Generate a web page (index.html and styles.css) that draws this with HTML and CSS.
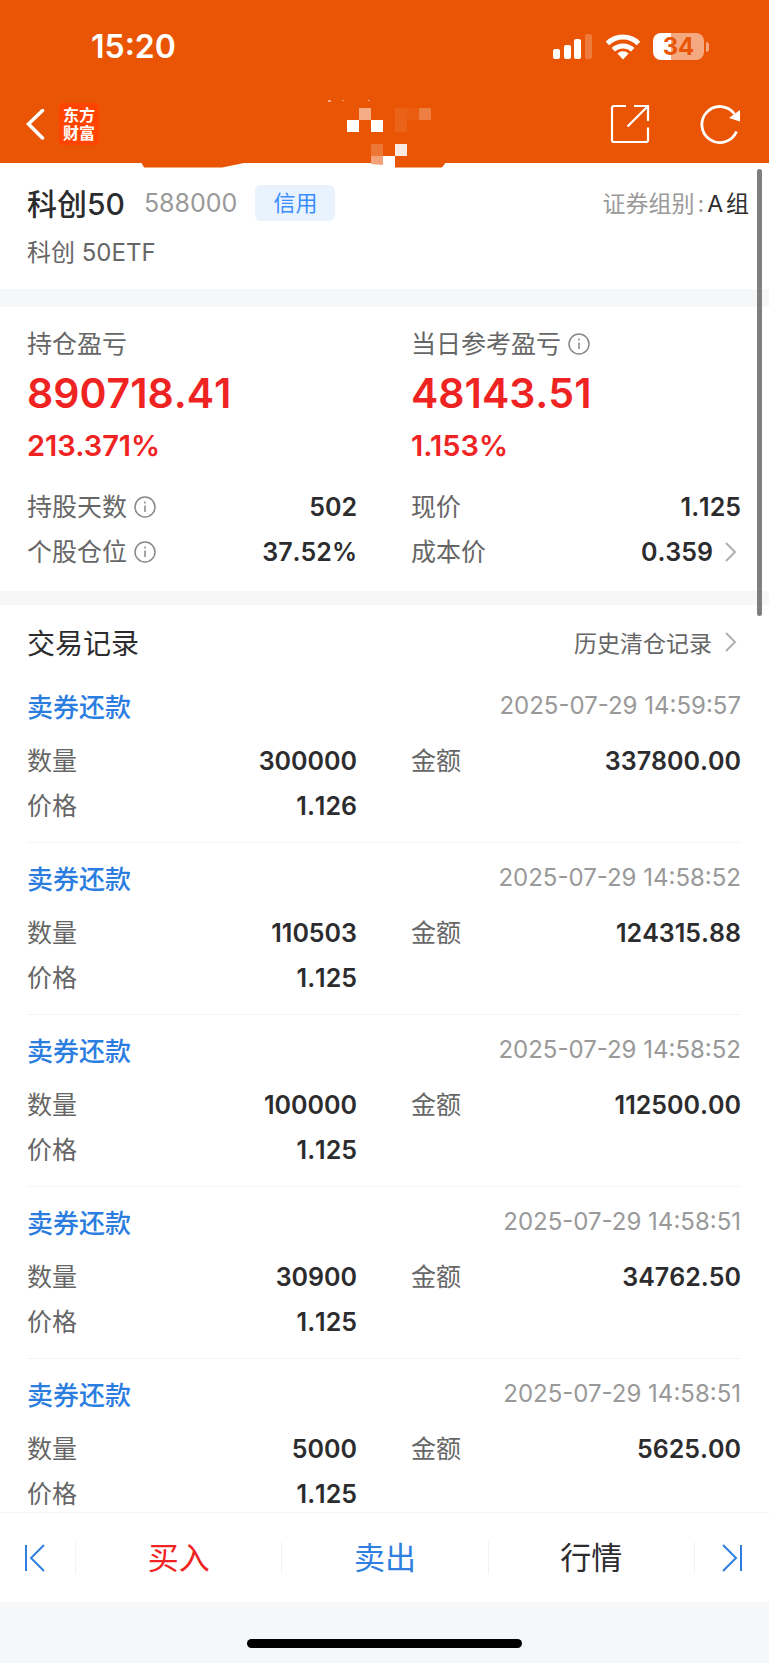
FILE: index.html
```html
<!DOCTYPE html>
<html lang="zh-CN">
<head>
<meta charset="utf-8">
<meta name="viewport" content="width=device-width, initial-scale=1">
<title>科创50 持仓详情</title>
<link rel="stylesheet" href="styles.css">
</head>
<body>
<div class="screen">
  <header class="header">
    <div class="status">
      <span class="clock">15:20</span>
      <div class="status-icons">
        <svg width="40" height="26" viewBox="0 0 40 26" fill="#fff" aria-hidden="true">
          <rect x="0" y="15" width="7" height="10" rx="2"/>
          <rect x="11" y="11" width="7" height="14" rx="2"/>
          <rect x="21" y="5" width="7" height="20" rx="2"/>
          <rect x="32" y="0" width="7" height="25" rx="2" opacity=".22"/>
        </svg>
        <svg width="36" height="26" viewBox="0 0 36 26" fill="none" stroke="#fff" stroke-width="5" aria-hidden="true">
          <path d="M2.5 9.5a22 22 0 0 1 31 0"/>
          <path d="M8.3 15.8a14 14 0 0 1 19.4 0"/>
          <path d="M18 25.5l-5.6-5.9a8 8 0 0 1 11.2 0z" fill="#fff" stroke="none"/>
        </svg>
        <div class="battery"><span class="battery-body">34</span><span class="battery-tip"></span></div>
      </div>
    </div>
    <nav class="nav">
      <button class="icon-btn" aria-label="返回">
        <svg width="19" height="32" viewBox="0 0 19 32" fill="none" stroke="#fff" stroke-width="3.500" stroke-linecap="round"><path d="M16.500 2.500 2.500 16l14 14"/></svg>
      </button>
      <div class="brand"><span>东方</span><span>财富</span></div>
      <div class="nav-actions">
        <button class="icon-btn" aria-label="分享">
          <svg width="40" height="40" viewBox="0 0 40 40" fill="none" stroke="#fff" stroke-width="2.200"><path d="M16 2H4Q2 2 2 4V36Q2 38 4 38H36Q38 38 38 36V23.500M24 2H38V17M38 2 17.500 22.500"/></svg>
        </button>
        <button class="icon-btn" aria-label="刷新">
          <svg width="40" height="40" viewBox="0 0 40 40" fill="none" stroke="#fff" stroke-width="2.800"><path d="M36.500 27.500A18 18 0 1 1 34.500 10"/><path d="M40 6V17.500L29 14z" fill="#fff" stroke="none"/></svg>
        </button>
      </div>
    </nav>
    <svg class="mosaic" width="305" height="68" viewBox="0 0 305 68" aria-hidden="true">
      <path d="M0 62h108l-27 5.500H3zM225 62h5v1zM254 55H305V62L301 67.500H254z" fill="#e95504"/>
      <g fill="#fff">
        <rect x="206" y="20" width="12" height="12"/>
        <rect x="218" y="8" width="12" height="12" opacity=".52"/>
        <rect x="230" y="20" width="12" height="12"/>
        <rect x="230" y="44" width="12" height="12" opacity=".2"/>
        <rect x="242" y="56" width="12" height="12"/>
        <rect x="254" y="8" width="12" height="24" opacity=".08"/>
        <rect x="266" y="8" width="12" height="12" opacity=".05"/>
        <rect x="278" y="8" width="12" height="12" opacity=".25"/>
        <rect x="254" y="44" width="12" height="12" opacity=".88"/>
        <rect x="187" y="0" width="3" height="2" opacity=".5"/>
        <rect x="201" y="0" width="2" height="1" opacity=".4"/>
        <rect x="227" y="0" width="2" height="1" opacity=".5"/>
      </g>
      <path d="M230 56H242V65L230 64z" fill="#f4a079"/>
    </svg>
  </header>

  <main class="content">
    <section class="security">
      <div class="security-row">
        <h1 class="name">科创50</h1>
        <span class="code">588000</span>
        <span class="tag">信用</span>
        <span class="group"><span>证券组别</span><span>:</span><span class="group-value">A</span><span class="group-value">组</span></span>
      </div>
      <div class="fullname">科创 50ETF</div>
    </section>

    <section class="position">
      <div class="cols">
        <div>
          <div class="label">持仓盈亏</div>
          <div class="amount">890718.41</div>
          <div class="percent">213.371%</div>
        </div>
        <div>
          <div class="label">当日参考盈亏 <svg class="info" viewBox="0 0 22 22"><circle cx="11" cy="11" r="10"/><path d="M11 9.500V16M11 5.500V7.500"/></svg></div>
          <div class="amount">48143.51</div>
          <div class="percent">1.153%</div>
        </div>
      </div>
      <div class="cols">
        <div class="pair"><span class="label">持股天数 <svg class="info" viewBox="0 0 22 22"><circle cx="11" cy="11" r="10"/><path d="M11 9.500V16M11 5.500V7.500"/></svg></span><b>502</b></div>
        <div class="pair"><span class="label">现价</span><b>1.125</b></div>
        <div class="pair"><span class="label">个股仓位 <svg class="info" viewBox="0 0 22 22"><circle cx="11" cy="11" r="10"/><path d="M11 9.500V16M11 5.500V7.500"/></svg></span><b>37.52%</b></div>
        <div class="pair"><span class="label">成本价</span><b class="linked">0.359 <svg class="more" viewBox="0 0 12 20"><path d="M1 1 10 10 1 19"/></svg></b></div>
      </div>
    </section>

    <section class="records">
      <div class="records-head">
        <h2>交易记录</h2>
        <a class="history" href="#history">历史清仓记录 <svg class="more" viewBox="0 0 12 20"><path d="M1 1 10 10 1 19"/></svg></a>
      </div>
      <article class="record">
        <div class="record-top"><h3>卖券还款</h3><time>2025-07-29 14:59:57</time></div>
        <div class="cols">
          <div class="pair"><span class="label">数量</span><b>300000</b></div>
          <div class="pair"><span class="label">金额</span><b>337800.00</b></div>
          <div class="pair"><span class="label">价格</span><b>1.126</b></div>
        </div>
      </article>
      <article class="record">
        <div class="record-top"><h3>卖券还款</h3><time>2025-07-29 14:58:52</time></div>
        <div class="cols">
          <div class="pair"><span class="label">数量</span><b>110503</b></div>
          <div class="pair"><span class="label">金额</span><b>124315.88</b></div>
          <div class="pair"><span class="label">价格</span><b>1.125</b></div>
        </div>
      </article>
      <article class="record">
        <div class="record-top"><h3>卖券还款</h3><time>2025-07-29 14:58:52</time></div>
        <div class="cols">
          <div class="pair"><span class="label">数量</span><b>100000</b></div>
          <div class="pair"><span class="label">金额</span><b>112500.00</b></div>
          <div class="pair"><span class="label">价格</span><b>1.125</b></div>
        </div>
      </article>
      <article class="record">
        <div class="record-top"><h3>卖券还款</h3><time>2025-07-29 14:58:51</time></div>
        <div class="cols">
          <div class="pair"><span class="label">数量</span><b>30900</b></div>
          <div class="pair"><span class="label">金额</span><b>34762.50</b></div>
          <div class="pair"><span class="label">价格</span><b>1.125</b></div>
        </div>
      </article>
      <article class="record">
        <div class="record-top"><h3>卖券还款</h3><time>2025-07-29 14:58:51</time></div>
        <div class="cols">
          <div class="pair"><span class="label">数量</span><b>5000</b></div>
          <div class="pair"><span class="label">金额</span><b>5625.00</b></div>
          <div class="pair"><span class="label">价格</span><b>1.125</b></div>
        </div>
      </article>
    </section>
    <div class="scrollbar"></div>
  </main>

  <footer class="footer">
    <div class="toolbar">
      <button class="step first" aria-label="上一只"><svg width="22" height="28" viewBox="0 0 22 28"><path d="M2 1V27M20 1 7 14 20 27"/></svg></button>
      <button class="action buy">买入</button>
      <button class="action sell">卖出</button>
      <button class="action">行情</button>
      <button class="step last" aria-label="下一只"><svg width="22" height="28" viewBox="0 0 22 28"><path d="M20 1V27M2 1 15 14 2 27"/></svg></button>
    </div>
    <div class="home"><span class="home-bar"></span></div>
  </footer>
</div>
</body>
</html>
```

FILE: styles.css
```css
* { box-sizing: border-box; margin: 0; padding: 0; }

body {
  font-family: Inter, "Noto Sans CJK SC", sans-serif;
  color: #2c2c2e;
  background: #fff;
}

button {
  border: 0;
  background: none;
  font: inherit;
  color: inherit;
}

svg { display: block; }

.screen {
  display: flex;
  flex-direction: column;
  height: 100vh;
}

/* Header */
.header {
  position: relative;
  z-index: 1;
  flex: none;
  background: #e95504;
  color: #fff;
}

.status {
  display: flex;
  align-items: center;
  justify-content: space-between;
  height: 86px;
  padding: 7px 60px 0 91px;
}

.clock {
  font-size: 32px;
  font-weight: 600;
  line-height: 40px;
}

.status-icons {
  display: flex;
  align-items: center;
  gap: 12px;
}

.battery {
  display: flex;
  align-items: center;
  gap: 2px;
}

.battery-body {
  width: 51px;
  border-radius: 8px;
  background: linear-gradient(90deg, #fff 35%, #f4a981 35%);
  color: #e95504;
  font-size: 24px;
  font-weight: 700;
  line-height: 27px;
  text-align: center;
}

.battery-tip {
  width: 3px;
  height: 10px;
  border-radius: 0 5px 5px 0;
  background: #f4a981;
}

.nav {
  display: flex;
  align-items: center;
  height: 77px;
  padding: 0 29px 2px 26px;
}

.brand {
  display: flex;
  flex-direction: column;
  align-items: center;
  justify-content: center;
  width: 40px;
  height: 42px;
  margin-left: 14px;
  border-radius: 4px;
  background: #ff4400;
  font-size: 16px;
  font-weight: 700;
  line-height: 18px;
}

.nav-actions {
  display: flex;
  gap: 50px;
  margin-left: auto;
}

.mosaic {
  position: absolute;
  left: 141px;
  top: 100px;
}

/* Content */
.content {
  position: relative;
  flex: 1;
  min-height: 0;
  overflow: hidden;
}

.scrollbar {
  position: absolute;
  top: 6px;
  right: 7px;
  width: 5px;
  height: 447px;
  border-radius: 3px;
  background: #7f7f80;
}

.security {
  padding: 20px 20px 18px 27px;
  border-bottom: 18px solid #f6f7f9;
}

.security-row {
  display: flex;
  align-items: center;
  height: 40px;
}

.name {
  margin-bottom: 3px;
  font-size: 30px;
  font-weight: 500;
}

.code {
  margin-left: 19px;
  color: #999;
  font-size: 25px;
}

.tag {
  margin-left: 18px;
  padding: 0 18px;
  border-radius: 6px;
  background: #e8f3fe;
  color: #3b8cff;
  font-size: 22px;
  line-height: 36px;
}

.group {
  display: flex;
  align-items: baseline;
  gap: 3px;
  margin-bottom: 3px;
  margin-left: auto;
  color: #999;
  font-size: 23px;
}

.group-value { color: #2c2c2e; }

.fullname {
  margin-top: 12px;
  color: #666;
  font-size: 24px;
  line-height: 36px;
}

.cols {
  display: grid;
  grid-template-columns: 1fr 1fr;
  column-gap: 54px;
}

.label {
  display: flex;
  align-items: center;
  gap: 7px;
  color: #666;
  font-size: 25px;
  line-height: 36px;
}

.info {
  width: 22px;
  height: 22px;
  fill: none;
  stroke: #888;
  stroke-width: 1.5;
}

.more {
  width: 12px;
  height: 20px;
  fill: none;
  stroke: #b0b0b0;
  stroke-width: 2;
}

.position {
  padding: 19px 28px 17px 27px;
  border-bottom: 14px solid #f7f7f8;
}

.amount {
  margin-top: 6px;
  color: #f02323;
  font-size: 41px;
  font-weight: 600;
  font-kerning: none;
  line-height: 50px;
}

.percent {
  margin: 11px 0 21px;
  color: #f02323;
  font-size: 29px;
  font-weight: 600;
  line-height: 34px;
}

.pair {
  display: flex;
  align-items: center;
  justify-content: space-between;
  height: 45px;
}

.pair b {
  font-size: 25px;
  font-weight: 600;
  font-kerning: none;
}

.pair .linked {
  display: flex;
  align-items: center;
  gap: 12px;
  padding-right: 4px;
}

.records { padding: 16px 28px 0 27px; }

.records-head {
  display: flex;
  align-items: center;
  justify-content: space-between;
  height: 42px;
  margin-bottom: 8px;
}

.records-head h2 {
  font-size: 28px;
  font-weight: 400;
}

.history {
  display: flex;
  align-items: center;
  gap: 13px;
  padding-right: 4px;
  color: #666;
  font-size: 23px;
  text-decoration: none;
}

.record {
  padding: 16px 0 14px;
  border-bottom: 1px solid #f4f4f4;
}

.record-top {
  display: flex;
  align-items: center;
  justify-content: space-between;
  height: 36px;
  margin-bottom: 15px;
}

.record-top h3 {
  color: #2b7de0;
  font-size: 26px;
  font-weight: 500;
}

.record-top time {
  color: #999;
  font-size: 24px;
}

/* Footer */
.footer { flex: none; }

.toolbar {
  display: flex;
  align-items: center;
  height: 90px;
  border-top: 1px solid #f4f4f4;
  background: #fff;
}

.step {
  flex: none;
  width: 75px;
  padding: 0 24px;
}

.step path {
  fill: none;
  stroke: #2f7fe0;
  stroke-width: 2;
}

.action {
  flex: 1;
  height: 32px;
  border-left: 1px solid #f2f2f2;
  font-size: 31px;
  line-height: 30px;
}

.step.last {
  height: 32px;
  padding: 0 26px;
  border-left: 1px solid #f2f2f2;
}

.buy { color: #f02323; }

.sell { color: #2f7fe0; }

.home {
  display: flex;
  justify-content: center;
  height: 61px;
  padding-top: 37px;
  background: #f6f7f9;
}

.home-bar {
  width: 275px;
  height: 9px;
  border-radius: 5px;
  background: #000;
}
```
